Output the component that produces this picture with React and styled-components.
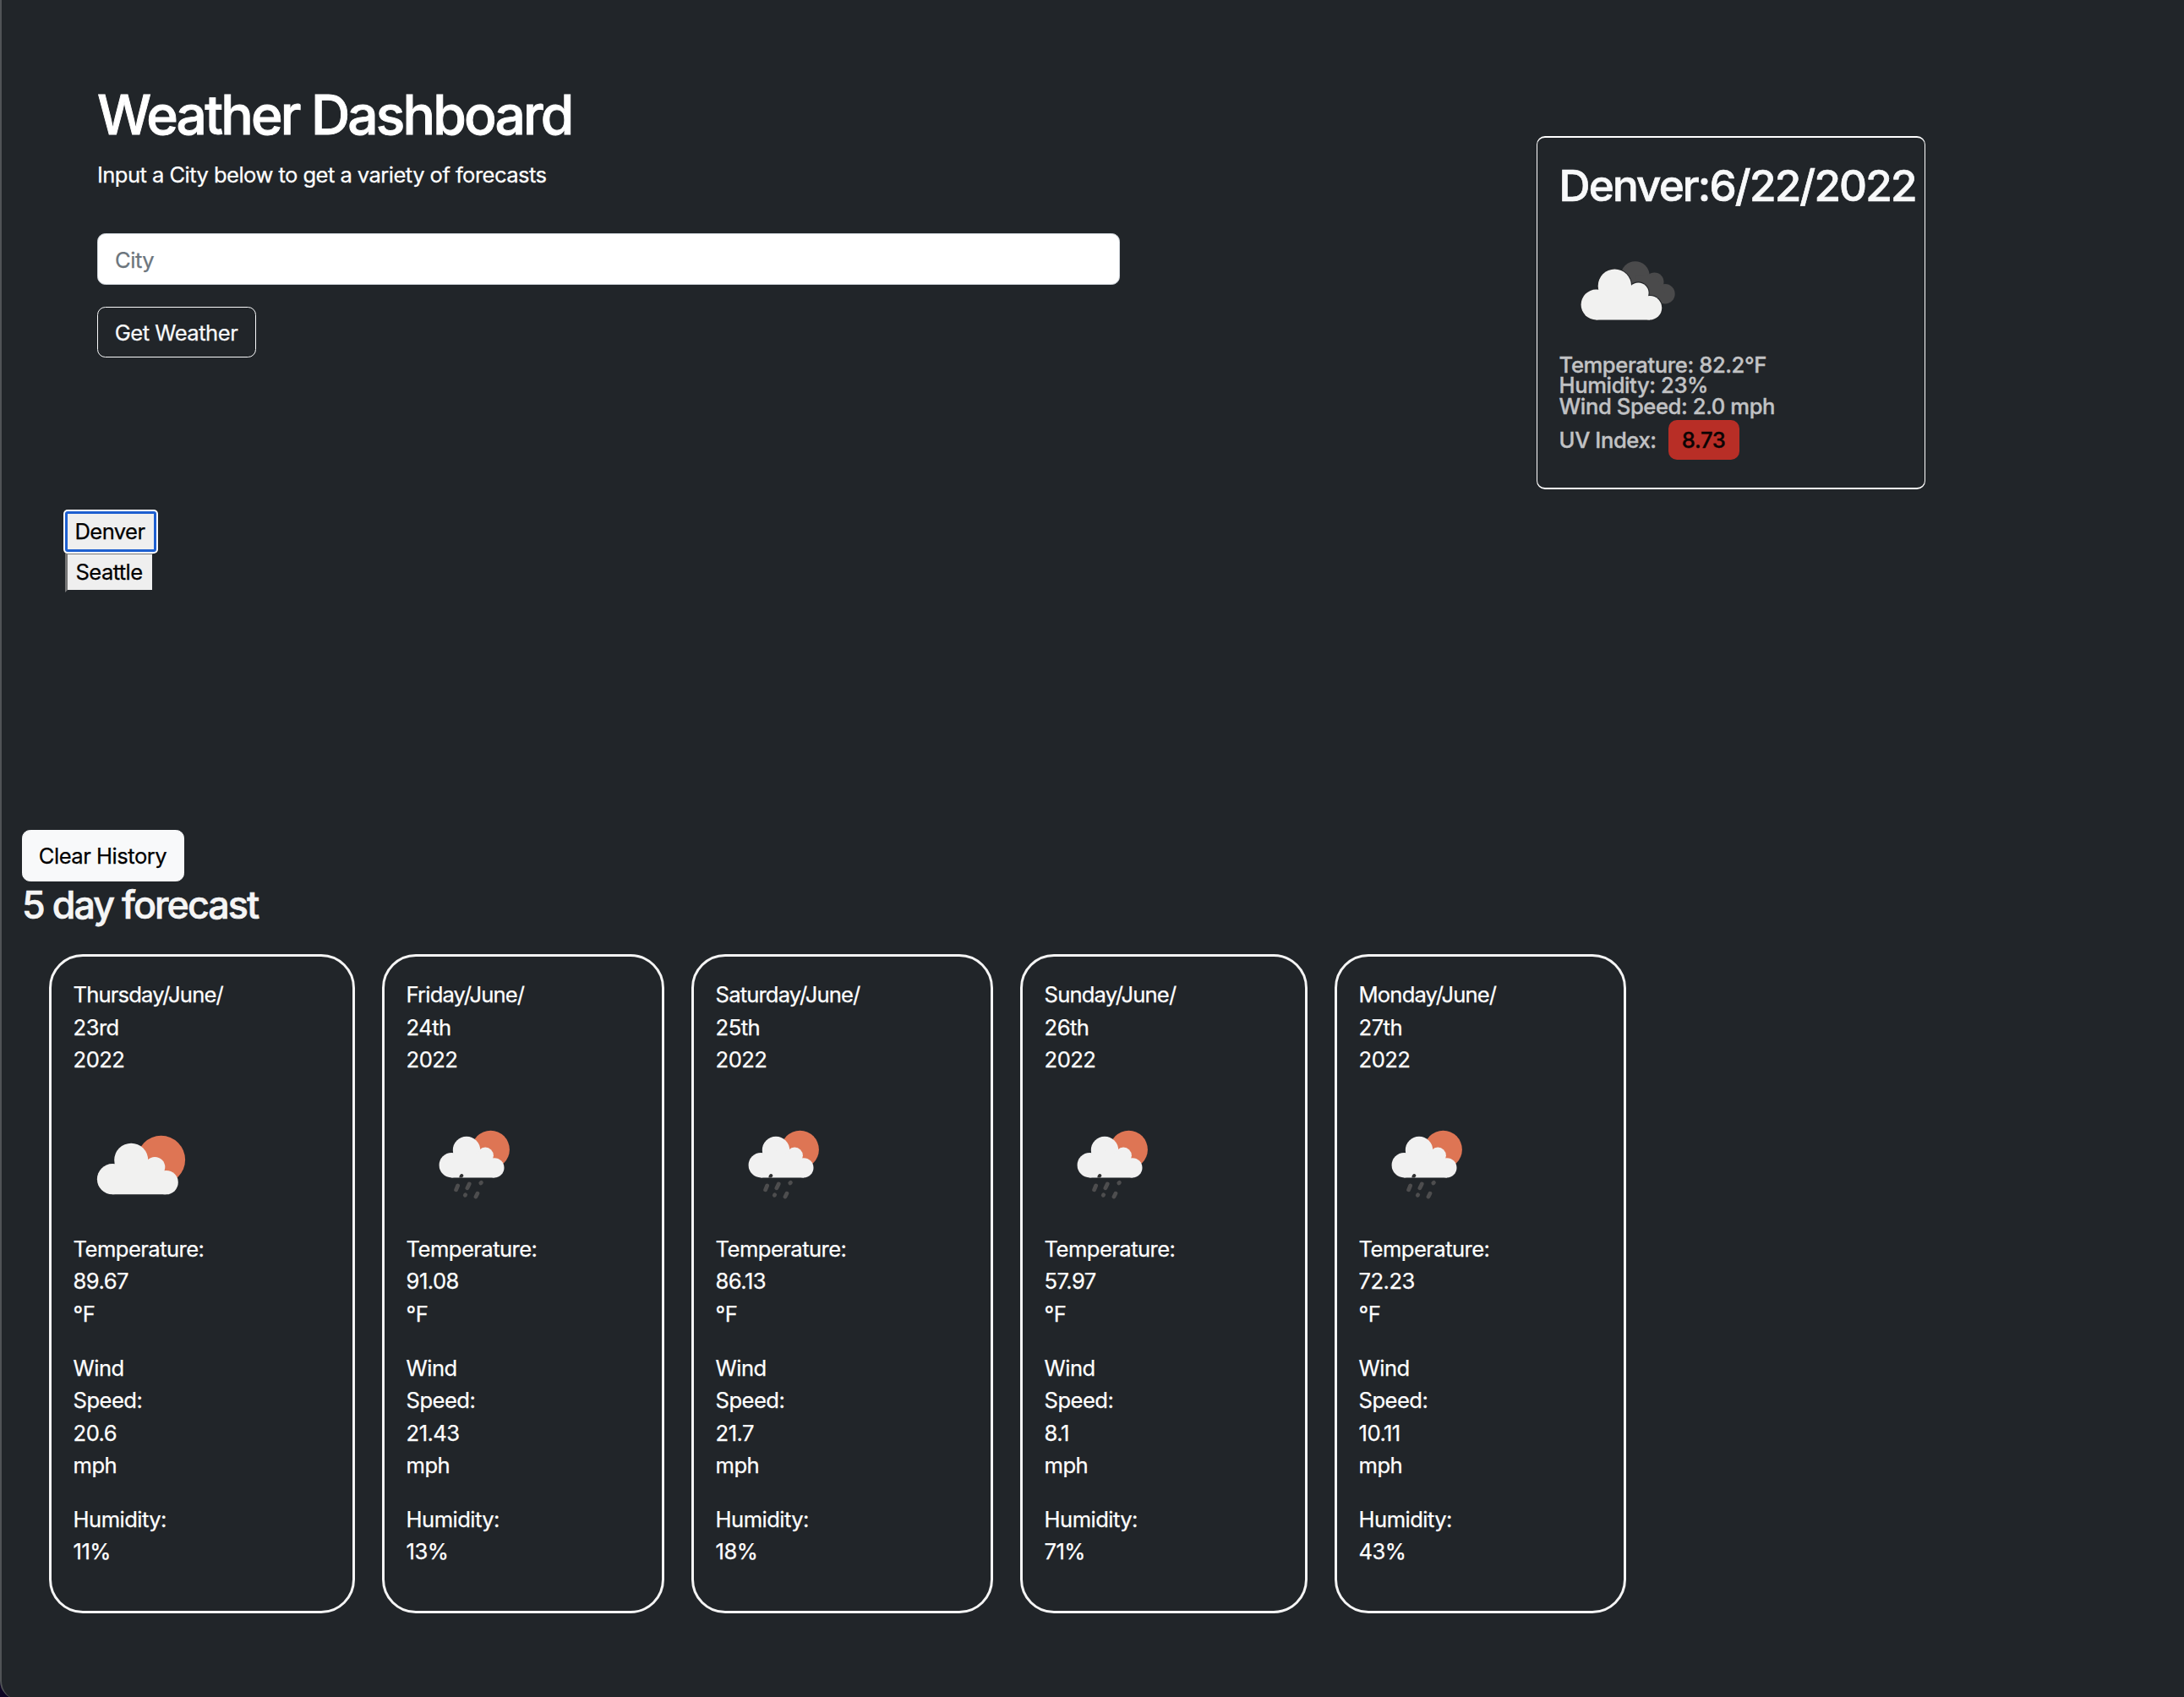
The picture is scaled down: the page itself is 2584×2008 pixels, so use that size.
import React from "react";
import styled, { createGlobalStyle } from "styled-components";

const Global = createGlobalStyle`
  *, *::before, *::after { box-sizing: border-box; }
  body {
    margin: 0;
    background: #0d0524;
    font-family: Inter, "Liberation Sans", sans-serif;
    font-size: 25.6px;
    font-weight: 400;
    line-height: 38.4px;
    letter-spacing: -0.56px;
    color: #fff;
    -webkit-text-stroke: 0.25px currentColor;
  }
  h1, h2, h3, p { margin: 0; }
`;

const Viewport = styled.div`
  height: 2008px;
  overflow: hidden;
`;

const Page = styled.main`
  height: 2011px;
  padding: 98px 24px 0;
  border-left: 2px solid #505356;
  border-bottom-left-radius: 22px;
  background: #212529;
`;

const TopRow = styled.section`
  display: flex;
  align-items: flex-start;
  height: 507px;
`;

const Search = styled.form`
  display: flex;
  flex-direction: column;
  align-items: flex-start;
  width: 1210px;
  margin-left: 89px;
`;

const Title = styled.h1`
  font-size: 64px;
  font-weight: 500;
  line-height: 76.8px;
  letter-spacing: -2.8px;
  white-space: nowrap;
  -webkit-text-stroke-width: 0.9px;
`;

const Intro = styled.p`
  margin: 13px 0 50px;
`;

const CityInput = styled.input`
  width: 100%;
  height: 61px;
  margin-bottom: 26px;
  padding: 1px 20px 0;
  border: 1px solid #ced4da;
  border-radius: 9.6px;
  background: #fff;
  font: inherit;
  letter-spacing: -0.5px;
  &::placeholder { color: #6c757d; opacity: 1; }
`;

const Button = styled.button`
  height: ${(p) => (p.$solid ? 61 : 60)}px;
  width: ${(p) => (p.$solid ? 192 : 188)}px;
  padding: 2px 1px 0 0;
  border: 1px solid #f8f9fa;
  border-radius: 9.6px;
  background: ${(p) => (p.$solid ? "#f8f9fa" : "transparent")};
  color: ${(p) => (p.$solid ? "#000" : "#f8f9fa")};
  font: inherit;
  letter-spacing: -0.5px;
`;

const Current = styled.article`
  width: 460px;
  height: 418px;
  margin: 63px 0 0 493px;
  padding: 25.6px;
  border: solid #fff;
  border-width: 2px 1px;
  border-radius: 10px;
`;

const CurrentTitle = styled.h2`
  margin-bottom: 12.8px;
  font-size: 51.2px;
  font-weight: 500;
  line-height: 61.4px;
  letter-spacing: -1.85px;
  color: #f8f9fa;
  white-space: nowrap;
  -webkit-text-stroke-width: 0.7px;
`;

const Readings = styled.div`
  margin-top: -3px;
`;

const Reading = styled.h3`
  font-size: 25.6px;
  font-weight: 500;
  line-height: 24.6px;
  letter-spacing: -0.4px;
  color: #c1c2c4;
  -webkit-text-stroke-width: 0.35px;
`;

const UvRow = styled(Reading)`
  display: flex;
  align-items: center;
  gap: 14px;
  height: 47px;
  margin-top: 3px;
`;

const UvLabel = styled.span`
  padding-top: 2px;
`;

const UvBadge = styled.span`
  display: flex;
  align-items: center;
  justify-content: center;
  width: 84px;
  height: 47px;
  padding-top: 2px;
  border-radius: 10px;
  background: #b82e26;
  color: #0b0404;
`;

const History = styled.nav`
  display: flex;
  flex-direction: column;
  align-items: flex-start;
  height: 377px;
  margin-left: 51px;
`;

const CityButton = styled.button`
  width: ${(p) => p.$w}px;
  height: 48px;
  padding: 0 2px 0 0;
  border: 3px solid;
  border-color: #767676 #212529 #212529 #767676;
  background: #efefef;
  color: #000;
  font: inherit;
  letter-spacing: -0.6px;
  line-height: 42px;
  ${(p) =>
    p.$active &&
    `position: relative;
     border-color: #1d5fd0;
     border-radius: 3px;
     box-shadow: 0 0 0 2px #fff;`}
`;

const ForecastTitle = styled.h3`
  padding-top: 3px;
  font-size: 44.8px;
  font-weight: 500;
  line-height: 50.8px;
  letter-spacing: -1.95px;
  color: #f5f5f5;
  -webkit-text-stroke-width: 0.65px;
`;

const Days = styled.section`
  display: flex;
  gap: 32px;
  margin: 32px 0 0 32px;
`;

const Day = styled.article`
  width: ${(p) => p.$w}px;
  height: 780px;
  padding: 26.4px 25.6px;
  border: 3px solid #f5f5f5;
  border-radius: 40px;
`;

const Lines = styled.p`
  display: flex;
  flex-direction: column;
  align-items: flex-start;
  margin-bottom: 25.6px;
`;

const DateLine = styled.span`
  letter-spacing: -0.85px;
`;

const Icon = styled.svg`
  display: block;
  width: 160px;
  height: 160px;
`;

const CloudSun = () => (
  <Icon viewBox="0 0 160 160">
    <circle cx="103.6" cy="73.3" r="28.5" fill="#de7554" />
    <g fill="#f1f1f0">
      <circle cx="46" cy="96.2" r="18.1" />
      <circle cx="68.2" cy="73.7" r="20" />
      <circle cx="96.2" cy="82" r="12.1" />
      <circle cx="109.6" cy="100.1" r="14.2" />
      <path d="M46 114.3V86L68 73l28 9 13.6 18v14.3z" />
    </g>
  </Icon>
);

const RainSun = () => (
  <Icon viewBox="0 0 160 160">
    <circle cx="99.5" cy="61.2" r="22.4" fill="#de7554" />
    <g fill="#f1f1f1">
      <circle cx="53.3" cy="79.7" r="14.7" />
      <circle cx="71" cy="62" r="16.2" />
      <circle cx="93.2" cy="68.3" r="9.7" />
      <circle cx="103.9" cy="82.8" r="11.6" />
      <path d="M53.3 94.4V70L71 62l22 6 11 15v11.4z" />
    </g>
    <path d="M62.4 94.4c-.3-5 5-6.2 5-1.8l-1.5 1.8z" fill="#303132" />
    <g stroke="#4d4d4e" strokeWidth="4.8" strokeLinecap="round">
      <path d="M60.6 104l-2 4.8M74.2 102l-2.3 4.8M88.4 100.4l-.6.5M69.7 114.8l-.4.5M83.9 113.2l-1.9 3.8" />
    </g>
  </Icon>
);

const BrokenClouds = () => (
  <Icon viewBox="0 0 160 160">
    <g fill="#4a4a4b">
      <circle cx="89.7" cy="63.2" r="17" />
      <circle cx="112.5" cy="70.5" r="11" />
      <circle cx="125" cy="84.7" r="11.7" />
      <path d="M89 64l23-3 13 23v12h-12L90 80z" />
    </g>
    <g fill="#222427" stroke="#222427" strokeWidth="2.5">
      <circle cx="43.5" cy="97.5" r="17.7" />
      <circle cx="65.4" cy="75.3" r="19.5" />
      <circle cx="93.4" cy="83.6" r="12" />
      <circle cx="107" cy="101.2" r="14" />
    </g>
    <g fill="#f1f1f0">
      <circle cx="43.5" cy="97.5" r="17.9" />
      <circle cx="65.4" cy="75.3" r="19.7" />
      <circle cx="93.4" cy="83.6" r="12.2" />
      <circle cx="107" cy="101.2" r="14.2" />
      <path d="M43.5 115.4V88l22-13 28 9 13.5 17v14.4z" />
    </g>
  </Icon>
);

const days = [
  { w: 362, day: "Thursday", date: "23rd", icon: CloudSun, temp: "89.67", wind: "20.6", hum: "11%" },
  { w: 334, day: "Friday", date: "24th", icon: RainSun, temp: "91.08", wind: "21.43", hum: "13%" },
  { w: 357, day: "Saturday", date: "25th", icon: RainSun, temp: "86.13", wind: "21.7", hum: "18%" },
  { w: 340, day: "Sunday", date: "26th", icon: RainSun, temp: "57.97", wind: "8.1", hum: "71%" },
  { w: 345, day: "Monday", date: "27th", icon: RainSun, temp: "72.23", wind: "10.11", hum: "43%" },
];

const TextLines = ({ items }) => (
  <Lines>
    {items.map((t) => (
      <span key={t}>{t}</span>
    ))}
  </Lines>
);

export default function App() {
  return (
    <>
      <Global />
      <Viewport>
        <Page>
          <TopRow>
            <Search>
              <Title>Weather Dashboard</Title>
              <Intro>Input a City below to get a variety of forecasts</Intro>
              <CityInput placeholder="City" />
              <Button type="button">Get Weather</Button>
            </Search>
            <Current>
              <CurrentTitle>Denver:6/22/2022</CurrentTitle>
              <BrokenClouds />
              <Readings>
                <Reading>Temperature: 82.2°F</Reading>
                <Reading>Humidity: 23%</Reading>
                <Reading>Wind Speed: 2.0 mph</Reading>
                <UvRow>
                  <UvLabel>UV Index:</UvLabel>
                  <UvBadge>8.73</UvBadge>
                </UvRow>
              </Readings>
            </Current>
          </TopRow>
          <History>
            <CityButton $w={108} $active>Denver</CityButton>
            <CityButton $w={106}>Seattle</CityButton>
          </History>
          <Button type="button" $solid>Clear History</Button>
          <ForecastTitle>5 day forecast</ForecastTitle>
          <Days>
            {days.map(({ w, day, date, icon: Weather, temp, wind, hum }) => (
              <Day key={day} $w={w}>
                <Lines>
                  <DateLine>{`${day}/June/`}</DateLine>
                  <span>{date}</span>
                  <span>2022</span>
                </Lines>
                <Weather />
                <TextLines items={["Temperature:", temp, "°F"]} />
                <TextLines items={["Wind", "Speed:", wind, "mph"]} />
                <TextLines items={["Humidity:", hum]} />
              </Day>
            ))}
          </Days>
        </Page>
      </Viewport>
    </>
  );
}
